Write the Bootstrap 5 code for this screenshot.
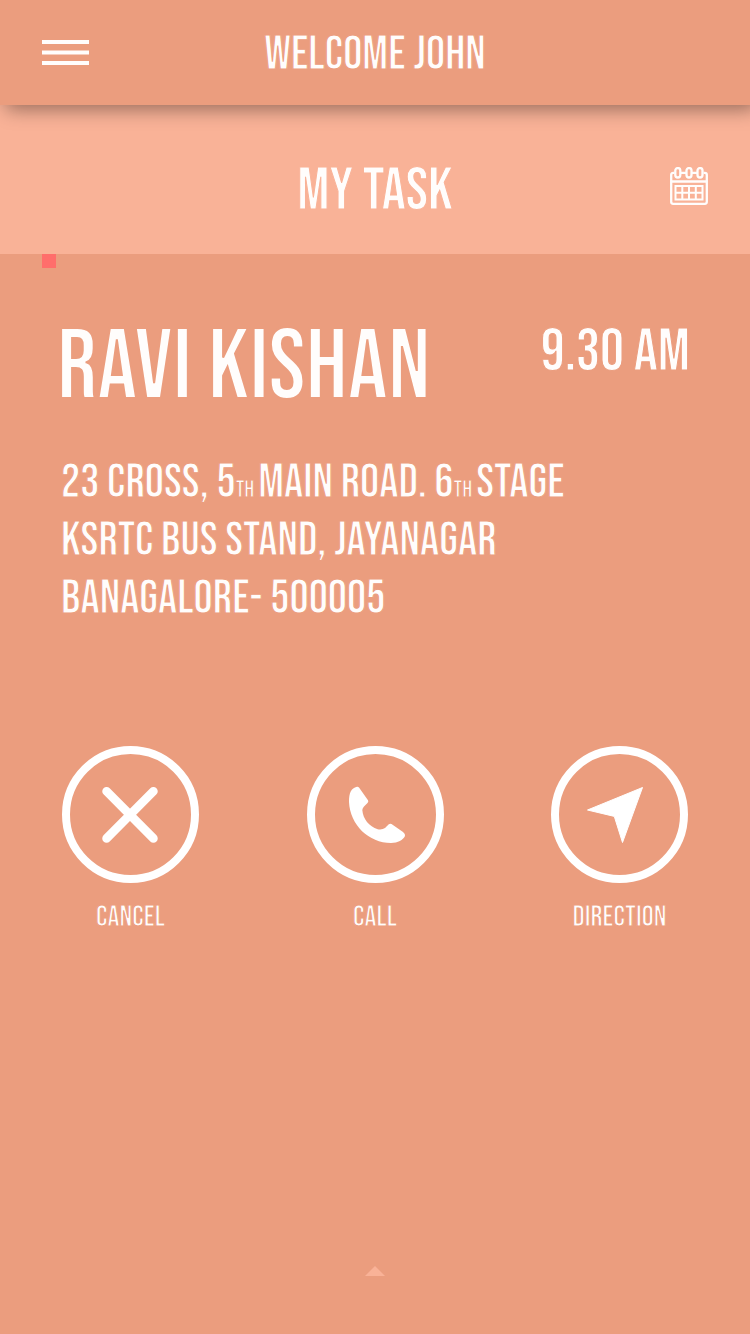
<!DOCTYPE html>
<html lang="en">
<head>
<meta charset="utf-8">
<meta name="viewport" content="width=device-width, initial-scale=1">
<title>My Task</title>
<link rel="stylesheet" href="https://cdn.jsdelivr.net/npm/bootstrap@5.3.0/dist/css/bootstrap.min.css">
<style>
  :root { --base: #eb9d7e; --band: #f9b297; --ink: #fffdfc; --gutter: 42px; --inset: 62px; }
  body { background: var(--base); color: var(--ink); font-family: "Bebas Neue", "Open Sans Condensed Light", "Roboto Condensed", "Liberation Sans", sans-serif; }
  h1, h2, h3, p, time, .caption-text { font-weight: 400; margin: 0; -webkit-text-stroke: 1px var(--base); }
  svg { display: block; }
  .top-bar { background: var(--base); padding: 25px var(--gutter) 20px; box-shadow: 6px 4px 18px rgba(0, 0, 0, .4); z-index: 1; }
  .top-bar h1 { font-size: 48px; line-height: 60px; }
  .task-bar { background: var(--band); padding: 50px var(--gutter) 27px; }
  .task-bar h2 { font-size: 60px; line-height: 72px; -webkit-text-stroke-color: var(--band); }
  .icon-btn { color: var(--ink); border: 0; padding: 0; border-radius: 0; }
  .menu-btn { padding-top: 15px; }
  .calendar-btn { padding-top: 12px; }
  .marker { width: 14px; height: 14px; background: #ff6e6b; margin-left: var(--gutter); }
  .task { padding: 40px 60px 0 57px; }
  .task h3 { font-size: 100px; line-height: 120px; -webkit-text-stroke-width: 2px; }
  .task time { font-size: 60px; line-height: 72px; padding-top: 8px; }
  .address { font-size: 48px; line-height: 58px; padding: 26px 0 0 4px; }
  .ordinal { font-size: 24px; line-height: 24px; }
  .actions { padding: 118px var(--inset) 0; }
  .action { width: 137px; color: var(--ink); border: 0; background: none; padding: 0; font-size: 30px; line-height: 36px; gap: 16px; }
  .ring { width: 137px; height: 137px; border: 8px solid #fff; border-radius: 50%; }
  .expand { padding: 12px 0 58px; }
</style>
</head>
<body>
<div class="d-flex flex-column min-vh-100">
  <header class="top-bar d-flex align-items-start position-relative">
    <div class="d-flex flex-fill w-25">
      <button type="button" class="btn icon-btn menu-btn" aria-label="Menu">
        <svg width="47" height="25" viewBox="0 0 47 25" fill="currentColor"><path d="M0 0h47v4H0zM0 10.500h47v4H0zM0 21h47v4H0z"/></svg>
      </button>
    </div>
    <h1 class="text-nowrap">WELCOME JOHN</h1>
    <div class="flex-fill w-25"></div>
  </header>

  <section class="task-bar d-flex align-items-start">
    <div class="flex-fill w-25"></div>
    <h2 class="text-nowrap">MY TASK</h2>
    <div class="d-flex flex-fill w-25 justify-content-end">
      <button type="button" class="btn icon-btn calendar-btn" aria-label="Calendar">
        <svg width="38" height="38" viewBox="0 0 38 38" fill="none" stroke="currentColor" stroke-width="2.300">
          <path d="M4.500 5.800H3.200a2 2 0 0 0-2 2V34.800a2 2 0 0 0 2 2h31.600a2 2 0 0 0 2-2V7.800a2 2 0 0 0-2-2h-1.300M11 5.800h5M22 5.800h5M1 14.500h36"/>
          <rect x="5.300" y="1.100" width="5" height="9.400" rx="2.500"/><rect x="16.500" y="1.100" width="5" height="9.400" rx="2.500"/><rect x="27.500" y="1.100" width="5" height="9.400" rx="2.500"/>
          <path stroke-width="2" d="M5.500 19h27v13.500h-27zM12.300 19v13.500M19 19v13.500M25.800 19v13.500M5.500 25.700h27"/>
        </svg>
      </button>
    </div>
  </section>

  <main>
    <div class="marker"></div>
    <article class="task">
      <div class="d-flex justify-content-between align-items-start">
        <h3>RAVI KISHAN</h3>
        <time datetime="09:30">9.30 AM</time>
      </div>
      <p class="address">23 CROSS, 5<span class="ordinal">TH </span>MAIN ROAD. 6<span class="ordinal">TH </span>STAGE<br>KSRTC BUS STAND, JAYANAGAR<br>BANAGALORE- 500005</p>
    </article>
    <div class="actions d-flex justify-content-between">
      <button type="button" class="action d-flex flex-column align-items-center">
        <span class="ring"><svg viewBox="8 8 121 121" fill="none" stroke="#fff" stroke-width="8.700" stroke-linecap="round"><path d="M44.600 45.300 91.400 92.400M91.400 45.300 44.600 92.400"/></svg></span>
        <span class="caption-text">CANCEL</span>
      </button>
      <button type="button" class="action d-flex flex-column align-items-center">
        <span class="ring"><svg viewBox="8 8 121 121" fill="#fff"><path d="M50 40.700C44 42 42 47 42 56C43 79 62 97 84 97C91 97 96 94 98 90Q98.500 88 96 86L84.500 78Q83 77.300 81.500 78.500L78 82Q75.500 84 70.700 83.300C62 80.500 56 73 55.300 64Q55.500 62 57 60.500L60.500 57Q61.800 55.700 61 54.300L52 41.500Q51 40.400 50 40.700Z"/></svg></span>
        <span class="caption-text">CALL</span>
      </button>
      <button type="button" class="action d-flex flex-column align-items-center">
        <span class="ring"><svg viewBox="8 8 121 121" fill="#fff" stroke="#fff" stroke-linejoin="round"><path d="M91.500 41.500 71.500 96.500 63.300 70.400 36.500 64z"/></svg></span>
        <span class="caption-text">DIRECTION</span>
      </button>
    </div>
  </main>

  <footer class="expand mt-auto d-flex justify-content-center">
    <button type="button" class="btn icon-btn" aria-label="Show more">
      <svg width="20" height="10" viewBox="0 0 20 10" fill="#f9b297"><path d="M10 0 20 10H0z"/></svg>
    </button>
  </footer>
</div>
<script src="https://cdn.jsdelivr.net/npm/bootstrap@5.3.0/dist/js/bootstrap.bundle.min.js"></script>
</body>
</html>
